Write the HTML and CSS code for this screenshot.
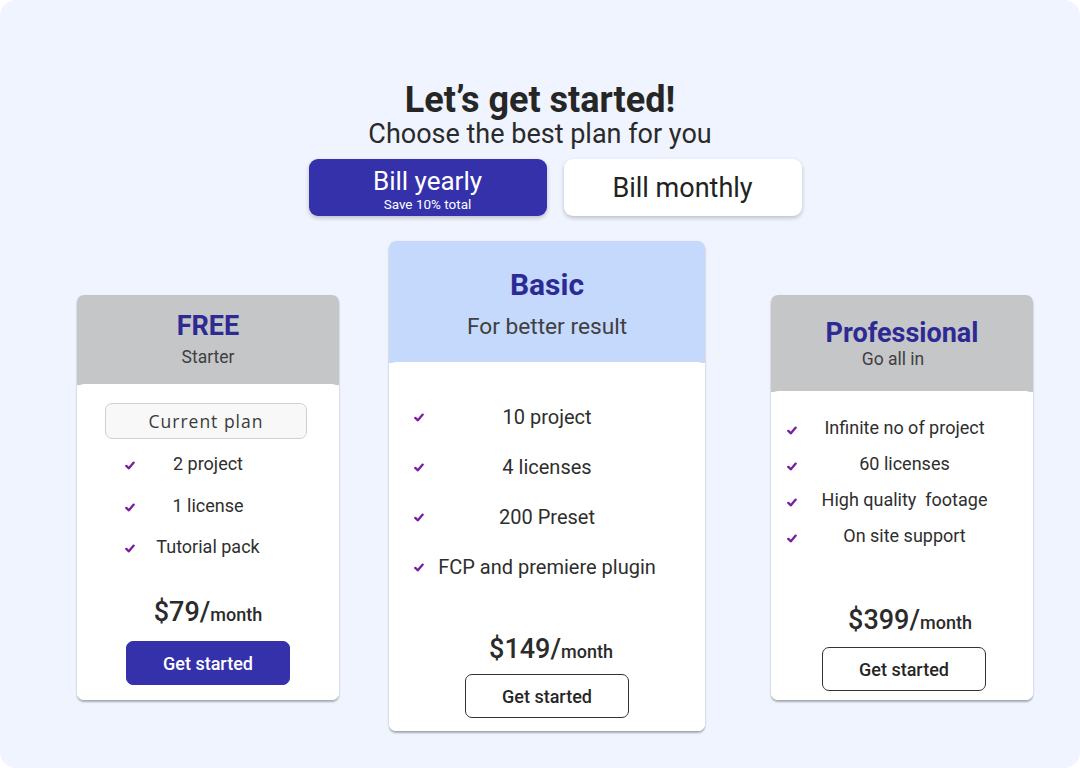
FILE: index.html
```html
<!DOCTYPE html>
<html lang="en">
<head>
<meta charset="utf-8">
<title>Pricing</title>
<link rel="stylesheet" href="styles.css">
</head>
<body>
<div class="page">
  <header class="intro">
    <h1 class="title">Let’s get started!</h1>
    <p class="subtitle">Choose the best plan for you</p>
    <div class="billing">
      <button class="bill bill-active"><span class="bill-label">Bill yearly</span><span class="bill-note">Save 10% total</span></button>
      <button class="bill"><span class="bill-label bill-label-lg">Bill monthly</span></button>
    </div>
  </header>

  <section class="plans">
    <article class="plan plan-free">
      <div class="plan-head">
        <h2 class="plan-name">FREE</h2>
        <p class="plan-tag">Starter</p>
      </div>
      <div class="plan-body">
        <div class="current">Current plan</div>
        <ul class="features">
          <li class="feature"><svg class="check" viewBox="0 0 10 9"><path d="M1.3 4.9 L3.9 7.3 L8.7 1.6"/></svg><span class="feature-text">2 project</span></li>
          <li class="feature"><svg class="check" viewBox="0 0 10 9"><path d="M1.3 4.9 L3.9 7.3 L8.7 1.6"/></svg><span class="feature-text">1 license</span></li>
          <li class="feature"><svg class="check" viewBox="0 0 10 9"><path d="M1.3 4.9 L3.9 7.3 L8.7 1.6"/></svg><span class="feature-text">Tutorial pack</span></li>
        </ul>
        <div class="price"><span class="amount">$79/</span><span class="per">month</span></div>
        <button class="cta cta-filled">Get started</button>
      </div>
    </article>

    <article class="plan plan-basic">
      <div class="plan-head">
        <h2 class="plan-name">Basic</h2>
        <p class="plan-tag">For better result</p>
      </div>
      <div class="plan-body">
        <ul class="features">
          <li class="feature"><svg class="check" viewBox="0 0 10 9"><path d="M1.3 4.9 L3.9 7.3 L8.7 1.6"/></svg><span class="feature-text">10 project</span></li>
          <li class="feature"><svg class="check" viewBox="0 0 10 9"><path d="M1.3 4.9 L3.9 7.3 L8.7 1.6"/></svg><span class="feature-text">4 licenses</span></li>
          <li class="feature"><svg class="check" viewBox="0 0 10 9"><path d="M1.3 4.9 L3.9 7.3 L8.7 1.6"/></svg><span class="feature-text">200 Preset</span></li>
          <li class="feature"><svg class="check" viewBox="0 0 10 9"><path d="M1.3 4.9 L3.9 7.3 L8.7 1.6"/></svg><span class="feature-text">FCP and premiere plugin</span></li>
        </ul>
        <div class="price"><span class="amount">$149/</span><span class="per">month</span></div>
        <button class="cta">Get started</button>
      </div>
    </article>

    <article class="plan plan-pro">
      <div class="plan-head">
        <h2 class="plan-name">Professional</h2>
        <p class="plan-tag">Go all in</p>
      </div>
      <div class="plan-body">
        <ul class="features">
          <li class="feature"><svg class="check" viewBox="0 0 10 9"><path d="M1.3 4.9 L3.9 7.3 L8.7 1.6"/></svg><span class="feature-text">Infinite no of project</span></li>
          <li class="feature"><svg class="check" viewBox="0 0 10 9"><path d="M1.3 4.9 L3.9 7.3 L8.7 1.6"/></svg><span class="feature-text">60 licenses</span></li>
          <li class="feature"><svg class="check" viewBox="0 0 10 9"><path d="M1.3 4.9 L3.9 7.3 L8.7 1.6"/></svg><span class="feature-text">High quality&nbsp; footage</span></li>
          <li class="feature"><svg class="check" viewBox="0 0 10 9"><path d="M1.3 4.9 L3.9 7.3 L8.7 1.6"/></svg><span class="feature-text">On site support</span></li>
        </ul>
        <div class="price"><span class="amount">$399/</span><span class="per">month</span></div>
        <button class="cta">Get started</button>
      </div>
    </article>
  </section>
</div>
</body>
</html>
```

FILE: styles.css
```css
* {
  box-sizing: border-box;
}

html, body {
  margin: 0;
  padding: 0;
  background: #ffffff;
}

body {
  font-family: Roboto, "Liberation Sans", Arial, sans-serif;
  color: #2b2b2b;
}

.page {
  width: 1080px;
  height: 768px;
  background: #eff4fe;
  border-radius: 16px;
  padding-top: 80px;
  overflow: hidden;
}

/* ---------- intro ---------- */
.intro {
  display: flex;
  flex-direction: column;
  align-items: center;
}

.title {
  margin: 0;
  font-size: 36px;
  line-height: 40px;
  font-weight: 700;
  color: #262626;
}

.subtitle {
  margin: -2px 0 0;
  font-size: 27px;
  line-height: 32px;
  font-weight: 400;
  color: #2a2a2a;
}

.billing {
  display: flex;
  justify-content: center;
  gap: 17px;
  width: 100%;
  padding-left: 30px;
  margin-top: 9px;
}

.bill {
  width: 238px;
  height: 57px;
  border: none;
  border-radius: 9px;
  background: #ffffff;
  color: #222222;
  font-family: inherit;
  display: flex;
  flex-direction: column;
  align-items: center;
  justify-content: center;
  box-shadow: 0 2px 4px rgba(0, 0, 0, 0.22);
  padding: 0;
  cursor: pointer;
}

.bill-active {
  background: #3431aa;
  color: #ffffff;
  padding-top: 4px;
}

.bill-label {
  font-size: 26px;
  line-height: 28px;
}

.bill-label-lg {
  font-size: 27px;
  line-height: 32px;
}

.bill-note {
  font-size: 13.5px;
  line-height: 15px;
  margin-top: 2px;
}

/* ---------- plans ---------- */
.plans {
  display: flex;
  align-items: flex-start;
  padding-left: 77px;
  margin-top: 25px;
}

.plan {
  display: flex;
  flex-direction: column;
  border-radius: 7px;
  overflow: hidden;
  background: #ffffff;
  box-shadow: 0 2px 2px rgba(0, 0, 0, 0.3), 0 0 1px rgba(0, 0, 0, 0.12);
}

.plan-free {
  width: 262px;
  height: 405px;
  margin-top: 54px;
  margin-right: 50px;
}

.plan-basic {
  width: 316px;
  height: 490px;
  margin-right: 66px;
}

.plan-pro {
  width: 262px;
  height: 405px;
  margin-top: 54px;
}

.plan-head {
  display: flex;
  flex-direction: column;
  align-items: center;
  background: #c5c6c8;
  text-align: center;
}

.plan-name {
  margin: 0;
  font-weight: 700;
  color: #2d2a94;
}

.plan-tag {
  margin: 0;
  font-weight: 400;
  color: #404040;
}

.plan-free .plan-head {
  height: 90px;
  padding-top: 16px;
}
.plan-free .plan-name {
  font-size: 27px;
  line-height: 30px;
}
.plan-free .plan-tag {
  font-size: 17.5px;
  line-height: 20px;
  margin-top: 6px;
}

.plan-basic .plan-head {
  height: 122px;
  padding-top: 26px;
  background: #c4d9fc;
}
.plan-basic .plan-name {
  font-size: 30px;
  line-height: 36px;
}
.plan-basic .plan-tag {
  font-size: 22.7px;
  line-height: 26px;
  margin-top: 11px;
}

.plan-pro .plan-head {
  height: 97px;
  padding-top: 23px;
}
.plan-pro .plan-name {
  font-size: 27px;
  line-height: 30px;
}
.plan-pro .plan-tag {
  font-size: 17.5px;
  line-height: 20px;
  margin-top: 1px;
  padding-right: 18px;
}

.plan-body {
  flex: 1;
  display: flex;
  flex-direction: column;
  align-items: center;
  background: #ffffff;
  border-radius: 7px 7px 0 0;
  margin-top: -1px;
}

.plan-free .plan-body {
  padding: 19px 0 15px;
}
.plan-basic .plan-body {
  padding: 30px 0 13px;
}
.plan-pro .plan-body {
  padding: 19px 0 9px;
}

.current {
  width: 202px;
  height: 36px;
  margin-right: 4px;
  border: 1px solid #cfcfcf;
  border-radius: 7px;
  background: #f8f8f9;
  font-family: "Open Sans", "Noto Sans", sans-serif;
  font-size: 17.5px;
  letter-spacing: 1px;
  color: #3a3a3a;
  display: flex;
  align-items: center;
  justify-content: center;
}

.features {
  list-style: none;
  margin: 0;
  padding: 0;
  align-self: stretch;
}

.feature {
  display: grid;
  grid-template-columns: 10px 1fr 10px;
  align-items: center;
  color: #2e2e2e;
}

.feature-text {
  text-align: center;
  white-space: nowrap;
}

.check {
  width: 10px;
  height: 9px;
  fill: none;
  stroke: #7a1ea1;
  stroke-width: 2.3;
  stroke-linecap: round;
  stroke-linejoin: round;
}

.plan-free .features {
  margin-top: 4px;
  padding: 0 48px 0 48px;
}
.plan-free .feature {
  height: 41.5px;
  font-size: 18px;
  line-height: 41.5px;
}
.plan-free .check,
.plan-pro .check {
  margin-top: 4px;
}

.plan-basic .features {
  padding: 0 25px 0 25px;
}
.plan-basic .feature {
  height: 50px;
  font-size: 20px;
  line-height: 50px;
}

.plan-pro .features {
  padding: 0 11px 0 16px;
}
.plan-pro .feature {
  height: 36px;
  font-size: 18px;
  line-height: 36px;
}

.price {
  margin-top: auto;
  line-height: 32px;
  font-weight: 500;
  color: #2b2b2b;
  white-space: nowrap;
}

.amount {
  font-size: 27px;
}

.per {
  font-size: 18px;
}

.plan-basic .price {
  padding-left: 8px;
}
.plan-pro .price {
  padding-left: 16px;
}

.cta {
  width: 164px;
  height: 44px;
  margin-top: 12px;
  border: 1px solid #333333;
  border-radius: 7px;
  background: #ffffff;
  color: #262626;
  font-family: inherit;
  font-size: 18px;
  font-weight: 500;
  padding: 0;
  cursor: pointer;
}

.plan-free .cta {
  margin-top: 9px;
}
.plan-basic .cta {
  margin-top: 5px;
}
.plan-pro .cta {
  margin-top: 7px;
  margin-left: 4px;
}

.cta-filled {
  background: #3431aa;
  border-color: #3431aa;
  color: #ffffff;
}
```
